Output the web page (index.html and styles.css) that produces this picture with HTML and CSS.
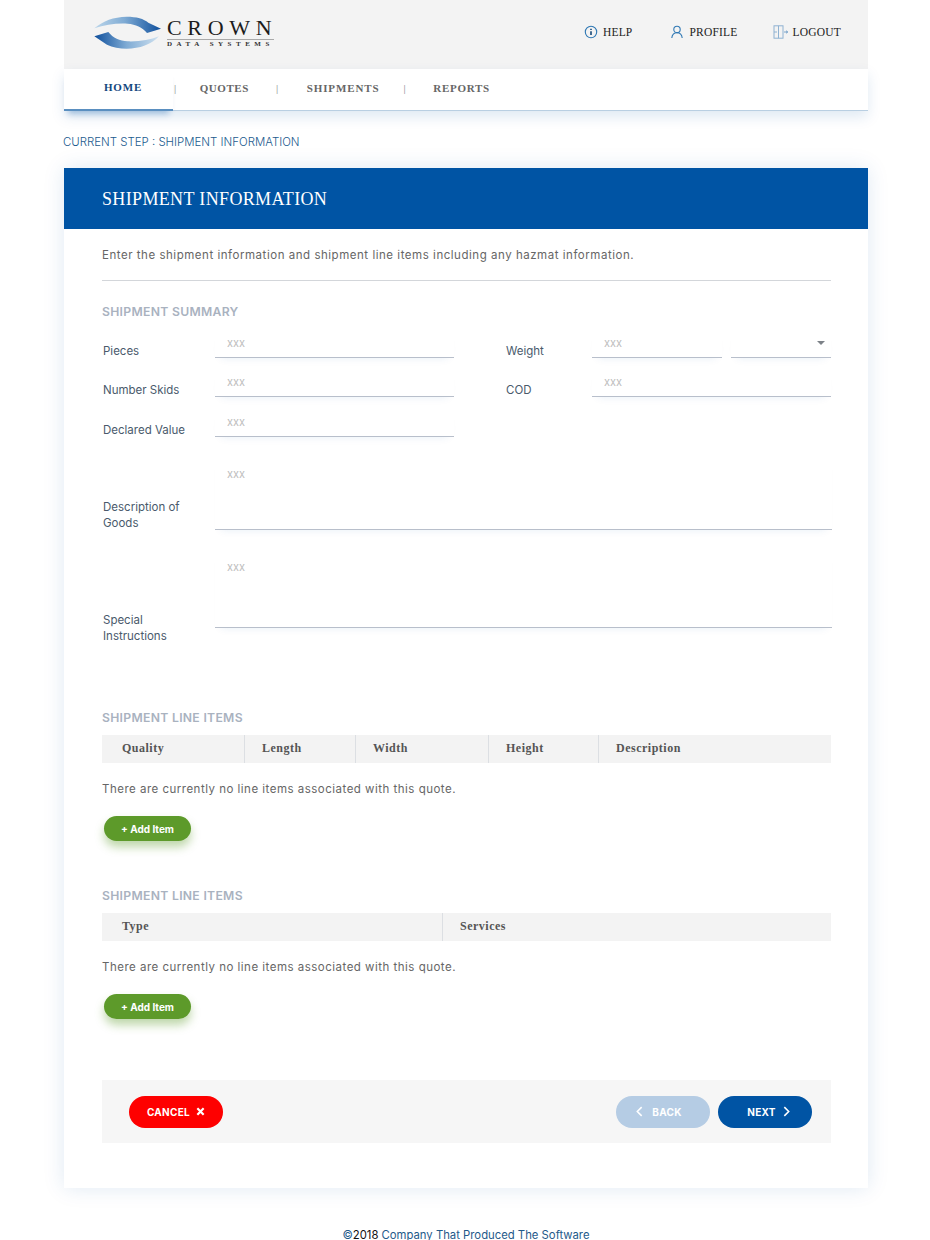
FILE: index.html
```html
<!DOCTYPE html>
<html lang="en">
<head>
  <meta charset="UTF-8">
  <title>Shipment Information</title>
  <link rel="stylesheet" href="styles.css">
</head>
<body>
  <div class="page">
    <header class="top-bar">
      <div class="logo">
        <svg class="logo-mark" viewBox="0 0 240 150" width="80" height="50">
          <defs>
            <linearGradient id="swoopTop" x1="0" x2="1" y1="0" y2="0">
              <stop offset="0" stop-color="#bcd6ea"/>
              <stop offset="0.45" stop-color="#7fabd4"/>
              <stop offset="1" stop-color="#0f4f9c"/>
            </linearGradient>
            <linearGradient id="swoopBottom" x1="0" x2="1" y1="0" y2="0">
              <stop offset="0" stop-color="#0f4f9c"/>
              <stop offset="0.5" stop-color="#7fabd4"/>
              <stop offset="1" stop-color="#cfe1f0"/>
            </linearGradient>
          </defs>
          <path fill="url(#swoopTop)" d="M28 61 C55 38 85 27 125 26 C155 26 176 32 190 44 L228 62 L186 75 C172 57 152 49 128 47 C95 45 60 50 28 61 Z"/>
          <path fill="url(#swoopBottom)" d="M28 85 L70 72 C84 90 104 99 128 100 C165 101 195 96 222 85 C198 110 165 122 125 122 C105 122 82 118 66 110 Z"/>
        </svg>
        <div class="logo-text">
          <div class="logo-name">CROWN</div>
          <div class="logo-sub">DATA SYSTEMS</div>
        </div>
      </div>
      <nav class="top-links">
        <a class="top-link link-help">
          <svg viewBox="0 0 14 14" width="14" height="14" fill="none" stroke="#2f78b4" stroke-width="1.100">
            <circle cx="7" cy="7" r="5.700"/>
            <path d="M7 6.200v3.800" stroke="#24527e" stroke-width="1.700"/>
            <path d="M7 3.800v1.300" stroke="#24527e" stroke-width="1.700"/>
          </svg>
          HELP
        </a>
        <a class="top-link link-profile">
          <svg viewBox="0 0 14 14" width="14" height="14" fill="none" stroke="#2f78b4" stroke-width="1.100">
            <circle cx="7" cy="4.400" r="3.200"/>
            <path d="M1.800 13c.3-3.200 2.300-5.200 5.200-5.200s4.900 2 5.200 5.200"/>
          </svg>
          PROFILE
        </a>
        <a class="top-link link-logout">
          <svg viewBox="0 0 16 14" width="16" height="14" fill="none" stroke="#8fb2d2" stroke-width="1">
            <rect x="1" y="0.800" width="9" height="12.400"/>
            <path d="M5.500 .8v12.400M1 7h3"/>
            <path d="M11 7h2.500" stroke-width="1.200"/>
            <path d="M13.500 5.800 15 7l-1.500 1.200z" fill="#8fb2d2"/>
          </svg>
          LOGOUT
        </a>
      </nav>
    </header>

    <nav class="main-nav">
      <a class="nav-item active">HOME</a>
      <span class="nav-sep">|</span>
      <a class="nav-item nav-quotes">QUOTES</a>
      <span class="nav-sep">|</span>
      <a class="nav-item nav-shipments">SHIPMENTS</a>
      <span class="nav-sep">|</span>
      <a class="nav-item nav-reports">REPORTS</a>
    </nav>

    <div class="current-step">CURRENT STEP : SHIPMENT INFORMATION</div>

    <main class="card">
      <h1 class="card-head">SHIPMENT INFORMATION</h1>
      <div class="card-body">
        <p class="intro">Enter the shipment information and shipment line items including any hazmat information.</p>

        <h2 class="section-title summary-title">SHIPMENT SUMMARY</h2>

        <div class="form-row row-first">
          <div class="col">
            <label class="field-label">Pieces</label>
            <input class="field" placeholder="xxx">
          </div>
          <div class="col col-right">
            <label class="field-label">Weight</label>
            <input class="field field-weight" placeholder="xxx">
            <div class="field-select"><span class="caret"></span></div>
          </div>
        </div>
        <div class="form-row">
          <div class="col">
            <label class="field-label">Number Skids</label>
            <input class="field" placeholder="xxx">
          </div>
          <div class="col col-right">
            <label class="field-label">COD</label>
            <input class="field" placeholder="xxx">
          </div>
        </div>
        <div class="form-row row-third">
          <div class="col">
            <label class="field-label">Declared Value</label>
            <input class="field" placeholder="xxx">
          </div>
        </div>
        <div class="form-row row-desc">
          <label class="field-label label-desc">Description of Goods</label>
          <textarea class="field-area area-desc" placeholder="xxx"></textarea>
        </div>
        <div class="form-row row-special">
          <label class="field-label label-special">Special Instructions</label>
          <textarea class="field-area area-special" placeholder="xxx"></textarea>
        </div>

        <h2 class="section-title line-title">SHIPMENT LINE ITEMS</h2>
        <div class="table-head cols-five">
          <div class="th">Quality</div>
          <div class="th">Length</div>
          <div class="th">Width</div>
          <div class="th">Height</div>
          <div class="th">Description</div>
        </div>
        <p class="empty">There are currently no line items associated with this quote.</p>
        <button class="btn-add">+ Add Item</button>

        <h2 class="section-title line-title-two">SHIPMENT LINE ITEMS</h2>
        <div class="table-head cols-two">
          <div class="th">Type</div>
          <div class="th">Services</div>
        </div>
        <p class="empty">There are currently no line items associated with this quote.</p>
        <button class="btn-add">+ Add Item</button>

        <div class="actions">
          <button class="btn btn-cancel">CANCEL
            <svg viewBox="0 0 10 10" width="9" height="9" stroke="#fff" stroke-width="2.400"><path d="M1.500 1.500l7 7M8.500 1.500l-7 7"/></svg>
          </button>
          <div class="actions-right">
            <button class="btn btn-back">
              <svg viewBox="0 0 8 12" width="7" height="11" fill="none" stroke="#fff" stroke-width="1.800"><path d="M6.500 1 1.500 6l5 5"/></svg>
              BACK
            </button>
            <button class="btn btn-next">NEXT
              <svg viewBox="0 0 8 12" width="7" height="11" fill="none" stroke="#fff" stroke-width="1.800"><path d="M1.500 1l5 5-5 5"/></svg>
            </button>
          </div>
        </div>
      </div>
    </main>

    <footer class="site-footer">©<span class="year">2018</span> Company That Produced The Software</footer>
  </div>
</body>
</html>
```

FILE: styles.css
```css
* {
  box-sizing: border-box;
}

body {
  margin: 0;
  background: #fff;
  font-family: Inter, "Noto Sans", sans-serif;
  color: #333;
}

.page {
  width: 804px;
  margin-left: 64px;
}

/* top bar */
.top-bar {
  display: flex;
  align-items: center;
  justify-content: space-between;
  height: 69px;
  padding: 0 27px 6px 21px;
  background: #f3f3f3;
}

.logo {
  display: flex;
  align-items: center;
}

.logo-mark {
  margin-top: 3px;
}

.logo-text {
  margin-left: 2px;
  margin-top: 3px;
  font-family: "Liberation Serif", serif;
  color: #1c1c1c;
}

.logo-name {
  width: 107px;
  font-size: 22px;
  line-height: 20px;
  letter-spacing: 5.700px;
  white-space: nowrap;
  border-bottom: 1px solid #a9a9a9;
  padding-bottom: 1px;
}

.logo-sub {
  font-size: 7px;
  font-weight: bold;
  line-height: 9px;
  letter-spacing: 4.500px;
  white-space: nowrap;
  color: #333;
}

.top-links {
  display: flex;
  gap: 35px;
}

.top-link {
  display: flex;
  align-items: center;
  gap: 5px;
  font-family: "Liberation Serif", serif;
  font-size: 11.500px;
  letter-spacing: 0.200px;
  color: #222;
}

.link-help {
  margin-right: 3px;
}

.link-logout {
  gap: 4px;
}

/* main nav */
.main-nav {
  position: relative;
  display: flex;
  align-items: center;
  gap: 27px;
  height: 42px;
  padding-bottom: 4px;
  background: #fff;
  border-bottom: 1px solid #b9cfe2;
  box-shadow: 0 6px 14px rgba(0, 84, 164, 0.13);
  font-family: "Liberation Serif", serif;
  font-size: 11px;
  font-weight: bold;
  letter-spacing: 0.550px;
  color: #666;
}

.nav-item.active {
  align-self: stretch;
  display: flex;
  align-items: center;
  width: 109px;
  padding-left: 40px;
  margin-right: -26px;
  margin-bottom: -5px;
  padding-bottom: 4px;
  letter-spacing: 0.800px;
  color: #14477e;
  border-bottom: 2px solid #5a8fc0;
  box-shadow: 0 7px 6px -4px rgba(0, 84, 164, 0.3);
}

.nav-quotes {
  margin-left: -4px;
}

.nav-shipments {
  margin-left: 1px;
  margin-right: -3px;
  letter-spacing: 0.900px;
}

.nav-reports {
  letter-spacing: 0.700px;
}

.nav-sep {
  font-weight: normal;
  color: #888;
}

.current-step {
  margin-top: 22px;
  margin-left: -1px;
  font-size: 11.450px;
  font-weight: 350;
  line-height: 18px;
  color: #1a5a8e;
}

/* card */
.card {
  margin-top: 17px;
  background: #fff;
  box-shadow: 0 0 20px rgba(0, 84, 164, 0.13);
}

.card-head {
  margin: 0;
  height: 61px;
  padding-left: 38px;
  background: #0054a4;
  color: #fff;
  font-family: "Liberation Serif", serif;
  font-size: 18px;
  font-weight: normal;
  line-height: 62px;
  letter-spacing: 0.350px;
}

.card-body {
  padding: 0 37px 45px 38px;
}

.intro {
  margin: 16px 0 0;
  padding-bottom: 15px;
  border-bottom: 1px solid #d3d6da;
  font-size: 11.500px;
  line-height: 20px;
  letter-spacing: 0.530px;
  color: #666;
}

.section-title {
  margin: 0 0 7px;
  font-size: 12.200px;
  font-weight: 600;
  line-height: 20px;
  letter-spacing: 0.300px;
  color: #a9b2bf;
}

.summary-title {
  margin-top: 21px;
  margin-bottom: 0;
}

.line-title {
  margin-top: 64px;
}

.line-title-two {
  margin-top: 45px;
}

/* form */
.form-row {
  display: flex;
  margin-top: 9px;
}

.row-first {
  margin-top: 6px;
}

.row-third {
  margin-top: 10px;
}

.col {
  display: flex;
  width: 404px;
  padding-left: 1px;
}

.col-right {
  width: 325px;
  padding-left: 0;
}

.col .field {
  width: 239px;
}

.col-right .field {
  width: 239px;
}

.col-right .field-weight {
  width: 130px;
}

.field-label {
  flex: none;
  width: 112px;
  margin-top: 14px;
  margin-bottom: -2px;
  font-size: 11.500px;
  line-height: 18px;
  color: #4a5a6c;
}

.col-right .field-label {
  width: 86px;
}

.field,
.field-area {
  display: block;
  height: 30px;
  padding: 0 12px;
  border: 0;
  border-bottom: 1px solid #b8bfcb;
  border-radius: 0;
  outline: 0;
  background: transparent;
  box-shadow: 0 6px 8px -6px rgba(0, 84, 164, 0.1);
  font-family: Inter, "Noto Sans", sans-serif;
  font-size: 11px;
  color: #333;
}

.field::placeholder,
.field-area::placeholder {
  color: #bdbdbd;
  opacity: 1;
}

.field-select {
  position: relative;
  width: 100px;
  height: 30px;
  margin-left: 9px;
  border-bottom: 1px solid #b8bfcb;
  box-shadow: 0 6px 8px -6px rgba(0, 84, 164, 0.1);
}

.caret {
  position: absolute;
  top: 13px;
  right: 6px;
  border-left: 4px solid transparent;
  border-right: 4px solid transparent;
  border-top: 4px solid #7d8288;
}

.field-area {
  flex: none;
  width: 617px;
  padding-top: 9px;
  line-height: 16px;
  resize: none;
}

.row-desc {
  margin-top: 20px;
  padding-left: 1px;
}

.area-desc {
  height: 73px;
}

.row-special {
  margin-top: 19px;
  padding-left: 1px;
}

.area-special {
  height: 78px;
}

.label-desc {
  margin-top: 42px;
  margin-bottom: 0;
  padding-right: 20px;
  line-height: 16px;
}

.label-special {
  margin-top: 63px;
  margin-bottom: 0;
  padding-right: 30px;
  line-height: 15.500px;
}

/* tables */
.table-head {
  display: grid;
  height: 28px;
  background: #f3f3f3;
  font-family: "Liberation Serif", serif;
  font-size: 12px;
  font-weight: bold;
  letter-spacing: 0.500px;
  color: #555;
}

.cols-five {
  grid-template-columns: 142px 111px 133px 110px 1fr;
}

.cols-two {
  grid-template-columns: 340px 1fr;
}

.th {
  padding-left: 17px;
  border-left: 1px solid #dcdfe3;
  line-height: 26px;
}

.th:first-child {
  padding-left: 20px;
  border-left: 0;
}

.empty {
  margin: 16px 0 0;
  font-size: 11.500px;
  line-height: 20px;
  letter-spacing: 0.490px;
  color: #666;
}

.btn-add {
  display: block;
  width: 87px;
  height: 25px;
  margin: 17px 0 0 2px;
  padding: 0;
  border: 0;
  border-radius: 13px;
  background: #5d9a2a;
  box-shadow: 0 6px 10px rgba(93, 154, 42, 0.4);
  font-family: Inter, "Noto Sans", sans-serif;
  font-size: 10px;
  font-weight: 700;
  color: #fff;
}

/* action bar */
.actions {
  display: flex;
  justify-content: space-between;
  align-items: center;
  height: 63px;
  margin-top: 61px;
  padding: 0 19px 0 27px;
  background: #f6f6f6;
}

.actions-right {
  display: flex;
  gap: 8px;
}

.btn {
  display: flex;
  align-items: center;
  justify-content: center;
  gap: 6px;
  width: 94px;
  height: 32px;
  padding: 0;
  border: 0;
  border-radius: 16px;
  font-family: Inter, "Noto Sans", sans-serif;
  font-size: 10px;
  font-weight: 700;
  letter-spacing: 0.300px;
  color: #fff;
}

.btn-cancel {
  background: #fe0000;
}

.btn-back {
  gap: 9px;
  padding-right: 8px;
  background: #b5cce4;
}

.btn-next {
  gap: 7px;
  padding-left: 7px;
  background: #0054a4;
}

.site-footer {
  margin-top: 42px;
  text-align: center;
  font-size: 11.300px;
  line-height: 10px;
  color: #1f5a8a;
}

.year {
  color: #111;
}
```
